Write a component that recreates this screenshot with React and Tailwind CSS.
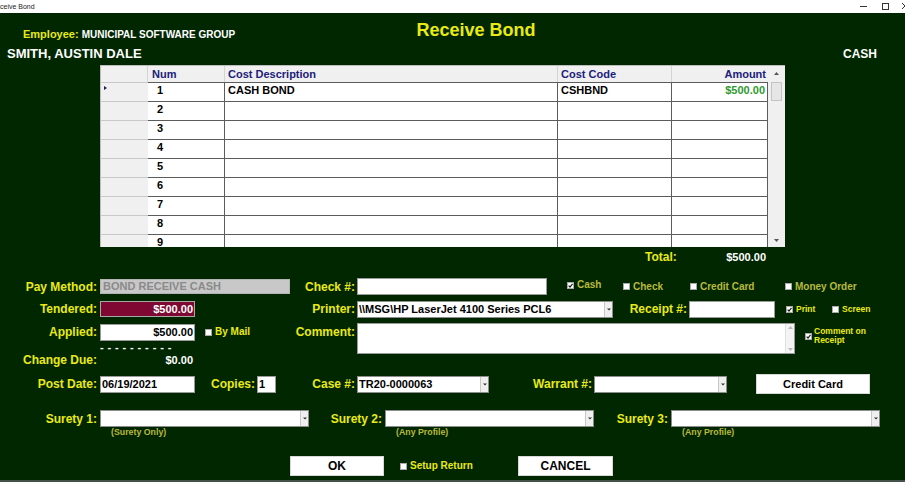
import React from "react";

function Label({ className = "", children }) {
  return (
    <div className={`${className} shrink-0 text-right text-[12px] font-bold leading-none text-[#eaea14]`}>
      {children}
    </div>
  );
}

function Check({ checked = false, label, dim = false, small = false }) {
  return (
    <div className="flex items-center">
      <span className="w-[7px] h-[7px] bg-white border border-[#a8a8a8] flex items-center justify-center shrink-0">
        {checked && (
          <svg width="5" height="5" viewBox="0 0 5 5">
            <path d="M0.6 2.6 L2 4 L4.5 0.8" stroke="#1a1a1a" strokeWidth="1.2" fill="none" />
          </svg>
        )}
      </span>
      <span
        className={`ml-[3px] font-bold leading-none ${small ? "text-[8.5px]" : "text-[10px]"} ${
          dim ? "text-[#b9b93a]" : "text-[#eaea14]"
        }`}
      >
        {label}
      </span>
    </div>
  );
}

function Select({ className = "", value = "" }) {
  return (
    <div className={`${className} shrink-0 h-[17px] bg-white border border-[#8c8c8c] flex items-stretch`}>
      <div className="flex-1 pl-[1px] text-[11px] font-bold leading-[15px] text-black whitespace-nowrap overflow-hidden">
        {value}
      </div>
      <div className="w-[8px] bg-[#efefef] border-l border-[#c8c8c8] flex items-center justify-center">
        <svg width="4" height="3" viewBox="0 0 4 3">
          <path d="M0 0.5 H4 L2 2.5 Z" fill="#333" />
        </svg>
      </div>
    </div>
  );
}

function Button({ className = "", children, size = "text-[12px]" }) {
  return (
    <div
      className={`${className} shrink-0 h-[20px] bg-white border border-[#d8d8d8] flex items-center justify-center font-bold text-black leading-none ${size}`}
    >
      {children}
    </div>
  );
}

const rows = [
  { n: "1", d: "CASH BOND", c: "CSHBND", a: "$500.00", cur: true },
  { n: "2" },
  { n: "3" },
  { n: "4" },
  { n: "5" },
  { n: "6" },
  { n: "7" },
  { n: "8" },
  { n: "9" },
];

export default function App() {
  return (
    <div className="w-[905px] h-[482px] overflow-hidden bg-[#012701] flex flex-col font-['Liberation_Sans',Arial,sans-serif]">
      {/* title bar */}
      <div className="h-[13px] bg-white flex items-center justify-between shrink-0">
        <span className="text-[7px] leading-none text-[#222]">ceive Bond</span>
        <svg width="50" height="13" viewBox="0 0 50 13">
          <line x1="5" y1="6.5" x2="12" y2="6.5" stroke="#333" strokeWidth="1" />
          <rect x="27.5" y="3.5" width="6" height="6" fill="none" stroke="#333" strokeWidth="1" />
          <line x1="47" y1="3" x2="50" y2="6" stroke="#333" strokeWidth="1" />
          <line x1="47" y1="9" x2="50" y2="6" stroke="#333" strokeWidth="1" />
        </svg>
      </div>

      {/* header */}
      <div className="h-[32px] flex shrink-0">
        <div className="w-[352px] pl-[23px] pt-[16px] flex items-baseline gap-[3px] leading-none">
          <span className="text-[11px] font-bold text-[#eaea14]">Employee:</span>
          <span className="text-[10px] font-bold text-white">MUNICIPAL SOFTWARE GROUP</span>
        </div>
        <div className="w-[248px] pt-[8px] text-center text-[18px] font-bold leading-none text-[#eaea14]">
          Receive Bond
        </div>
      </div>
      <div className="h-[20px] flex justify-between shrink-0">
        <div className="pl-[7px] pt-[2px] text-[13px] font-bold leading-none text-white">SMITH, AUSTIN DALE</div>
        <div className="pr-[28px] pt-[3px] text-[12px] font-bold leading-none text-white">CASH</div>
      </div>

      {/* grid */}
      <div className="pl-[100px] shrink-0">
        <div className="w-[685px] h-[182px] bg-white border-l border-t border-[#bcbcbc] flex overflow-hidden">
          <div className="w-[667px] flex flex-col">
            <div className="h-[16px] bg-[#f0f0f0] flex text-[11px] font-bold leading-none text-[#20207a] shrink-0">
              <div className="w-[47px] border-r border-[#d4d4d4]" />
              <div className="w-[77px] pl-[4px] flex items-center border-r border-[#d4d4d4]">Num</div>
              <div className="w-[333px] pl-[3px] flex items-center border-r border-[#d4d4d4]">Cost Description</div>
              <div className="w-[114px] pl-[3px] flex items-center border-r border-[#d4d4d4]">Cost Code</div>
              <div className="w-[96px] pr-[2px] flex items-center justify-end">Amount</div>
            </div>
            {rows.map((r) => (
              <div key={r.n} className="h-[19px] flex shrink-0 text-[11px] font-bold leading-none text-black">
                <div className="w-[47px] bg-[#f0f0f0] border-t border-[#c8c8c8] pl-[3px] pt-[3px]">
                  {r.cur && (
                    <div className="w-0 h-0 border-t-[2px] border-b-[2px] border-l-[3px] border-t-transparent border-b-transparent border-l-[#1a1a5a]" />
                  )}
                </div>
                <div className="w-[77px] border-t border-r border-[#5c5c5c] pl-[9px] pt-[2px]">{r.n}</div>
                <div className="w-[333px] border-t border-r border-[#5c5c5c] pl-[3px] pt-[2px]">{r.d}</div>
                <div className="w-[114px] border-t border-r border-[#5c5c5c] pl-[3px] pt-[2px]">{r.c}</div>
                <div className="w-[96px] border-t border-r border-[#5c5c5c] pr-[2px] pt-[2px] text-right text-[#2f9a2f]">
                  {r.a}
                </div>
              </div>
            ))}
          </div>
          {/* scrollbar */}
          <div className="w-[17px] bg-[#f0f0f0] flex flex-col items-center">
            <div className="h-[14px] flex items-center justify-center">
              <svg width="5" height="3" viewBox="0 0 5 3">
                <path d="M0 3 H5 L2.5 0 Z" fill="#555" />
              </svg>
            </div>
            <div className="mt-[2px] w-[11px] h-[19px] bg-[#e6e6e6] border border-[#c4c4c4]" />
            <div className="flex-1" />
            <div className="h-[14px] flex items-center justify-center">
              <svg width="5" height="3" viewBox="0 0 5 3">
                <path d="M0 0 H5 L2.5 3 Z" fill="#555" />
              </svg>
            </div>
          </div>
        </div>
      </div>

      {/* total */}
      <div className="h-[20px] flex items-center pl-[645px] shrink-0 leading-none font-bold">
        <span className="w-[80px] text-[12px] text-[#eaea14]">Total:</span>
        <span className="w-[41px] text-right text-[11px] text-white">$500.00</span>
      </div>

      {/* row A */}
      <div className="mt-[11px] h-[17px] flex items-center shrink-0">
        <Label className="w-[97px]">Pay Method:</Label>
        <div className="ml-[3px] w-[190px] h-[15px] shrink-0 bg-[#c8c8c8] border border-[#b4b4b4] pl-[2px] text-[11px] font-bold leading-[13px] text-[#8a8a8a]">
          BOND RECEIVE CASH
        </div>
        <Label className="w-[65px]">Check #:</Label>
        <div className="ml-[2px] w-[190px] h-[17px] shrink-0 bg-white border border-[#9a9a9a]" />
        <div className="ml-[20px] w-[56px] shrink-0 -mt-[3px]">
          <Check checked dim label="Cash" />
        </div>
        <div className="w-[67px] shrink-0">
          <Check dim label="Check" />
        </div>
        <div className="w-[95px] shrink-0">
          <Check dim label="Credit Card" />
        </div>
        <Check dim label="Money Order" />
      </div>

      {/* row B */}
      <div className="mt-[5px] h-[18px] flex items-center shrink-0">
        <Label className="w-[97px]">Tendered:</Label>
        <div className="ml-[3px] w-[95px] h-[16px] shrink-0 bg-[#7e0832] border border-[#a8a8a8] pr-[1px] text-right text-[11px] font-bold leading-[14px] text-white">
          $500.00
        </div>
        <Label className="w-[160px]">Printer:</Label>
        <Select className="ml-[2px] w-[256px]" value="\\MSG\HP LaserJet 4100 Series PCL6" />
        <Label className="w-[74px]">Receipt #:</Label>
        <div className="ml-[2px] w-[86px] h-[17px] shrink-0 bg-white border border-[#9a9a9a]" />
        <div className="ml-[11px] w-[46px] shrink-0">
          <Check checked small label="Print" />
        </div>
        <Check small label="Screen" />
      </div>

      {/* row C */}
      <div className="mt-[5px] h-[31px] flex items-start shrink-0">
        <div className="w-[195px] flex flex-col shrink-0">
          <div className="h-[18px] flex items-center">
            <Label className="w-[97px]">Applied:</Label>
            <div className="ml-[3px] w-[95px] h-[17px] shrink-0 bg-white border border-[#9a9a9a] pr-[1px] text-right text-[11px] font-bold leading-[15px] text-black">
              $500.00
            </div>
          </div>
          <div className="h-[12px] pl-[100px] text-[11px] font-bold leading-[12px] tracking-[0.4px] text-white whitespace-nowrap">
            - - - - - - - - - -
          </div>
        </div>
        <div className="w-[160px] h-[18px] pl-[10px] flex items-center justify-between shrink-0">
          <Check label="By Mail" />
          <Label>Comment:</Label>
        </div>
        <div className="ml-[2px] w-[438px] h-[31px] shrink-0 bg-white border border-[#9a9a9a] flex justify-end">
          <div className="w-[9px] bg-[#f4f4f4] border-l border-[#e0e0e0] flex flex-col justify-between items-center py-[2px]">
            <svg width="5" height="3" viewBox="0 0 5 3">
              <path d="M0 3 H5 L2.5 0 Z" fill="#b8b8b8" />
            </svg>
            <svg width="5" height="3" viewBox="0 0 5 3">
              <path d="M0 0 H5 L2.5 3 Z" fill="#b8b8b8" />
            </svg>
          </div>
        </div>
        <div className="ml-[10px] h-[26px] flex items-center shrink-0">
          <span className="w-[7px] h-[7px] bg-white border border-[#a8a8a8] flex items-center justify-center shrink-0">
            <svg width="5" height="5" viewBox="0 0 5 5">
              <path d="M0.6 2.6 L2 4 L4.5 0.8" stroke="#1a1a1a" strokeWidth="1.2" fill="none" />
            </svg>
          </span>
          <span className="ml-[2px] text-[8.5px] font-bold leading-[9.5px] text-[#eaea14]">
            Comment on
            <br />
            Receipt
          </span>
        </div>
      </div>

      {/* row D */}
      <div className="h-[12px] flex items-center shrink-0">
        <Label className="w-[97px]">Change Due:</Label>
        <div className="w-[96px] text-right text-[11px] font-bold leading-none text-white">$0.00</div>
      </div>

      {/* row E */}
      <div className="mt-[8px] h-[20px] flex items-center shrink-0">
        <Label className="w-[97px]">Post Date:</Label>
        <div className="ml-[3px] w-[95px] h-[17px] shrink-0 bg-white border border-[#9a9a9a] pl-[1px] text-[11px] font-bold leading-[15px] text-black">
          06/19/2021
        </div>
        <Label className="w-[60px]">Copies:</Label>
        <div className="ml-[2px] w-[19px] h-[17px] shrink-0 bg-white border border-[#9a9a9a] pl-[1px] text-[11px] font-bold leading-[15px] text-black">
          1
        </div>
        <Label className="w-[79px]">Case #:</Label>
        <Select className="ml-[2px] w-[132px]" value="TR20-0000063" />
        <Label className="w-[103px]">Warrant #:</Label>
        <Select className="ml-[2px] w-[133px]" />
        <Button className="ml-[29px] w-[114px]" size="text-[11px]">
          Credit Card
        </Button>
      </div>

      {/* row F */}
      <div className="mt-[16px] h-[17px] flex items-center shrink-0">
        <Label className="w-[97px]">Surety 1:</Label>
        <Select className="ml-[3px] w-[209px]" />
        <Label className="w-[73px]">Surety 2:</Label>
        <Select className="ml-[3px] w-[209px]" />
        <Label className="w-[74px]">Surety 3:</Label>
        <Select className="ml-[3px] w-[209px]" />
      </div>
      <div className="h-[11px] flex items-center pl-[100px] shrink-0 text-[8.8px] font-bold leading-none text-[#b9b93a]">
        <span className="w-[285px] pl-[11px]">(Surety Only)</span>
        <span className="w-[286px] pl-[11px]">(Any Profile)</span>
        <span className="pl-[11px]">(Any Profile)</span>
      </div>

      {/* row G */}
      <div className="mt-[18px] h-[20px] flex items-center shrink-0">
        <Button className="ml-[290px] w-[94px]">OK</Button>
        <div className="w-[134px] pl-[16px] flex items-center shrink-0">
          <Check label="Setup Return" />
        </div>
        <Button className="w-[95px]">CANCEL</Button>
      </div>

      <div className="flex-1" />
      <div className="h-[2px] bg-[#44524a] shrink-0" />
    </div>
  );
}
